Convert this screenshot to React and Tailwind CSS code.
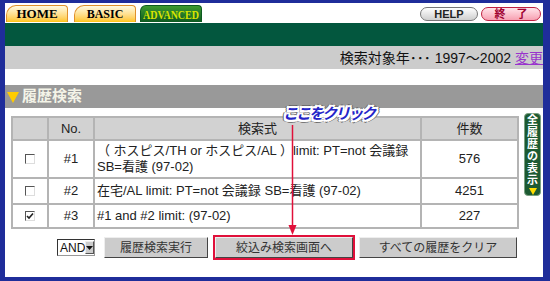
import React from 'react';

const jp = "font-['Liberation_Sans','Noto_Sans_CJK_JP',sans-serif]";

const Checkbox = ({ checked }) => (
  <span className="inline-flex w-[10px] h-[10px] items-center justify-center border border-t-[#555] border-l-[#555] border-b-[#ddd] border-r-[#ddd] bg-white">
    {checked && (
      <svg width="8" height="8" viewBox="0 0 8 8">
        <path d="M1 4 L3 6 L7 1.5" fill="none" stroke="#222" strokeWidth="1.6" />
      </svg>
    )}
  </span>
);

const GrayButton = ({ children, className = '' }) => (
  <button
    className={`h-[21px] bg-[#cccccc] border border-t-[#eee] border-l-[#eee] border-b-[#444] border-r-[#444] text-[12px] text-[#333] leading-none ${className}`}
  >
    {children}
  </button>
);

const rows = [
  {
    id: 1,
    h: 'h-[38px]',
    checked: false,
    query: (
      <>
        （ ホスピス/TH or ホスピス/AL ）limit: PT=not 会議録
        <br />
        SB=看護 (97-02)
      </>
    ),
    count: 576,
  },
  { id: 2, h: 'h-[26px]', checked: false, query: '在宅/AL limit: PT=not 会議録 SB=看護 (97-02)', count: 4251 },
  { id: 3, h: 'h-[24px]', checked: true, query: '#1 and #2 limit: (97-02)', count: 227 },
];

export default function App() {
  return (
    <div className={`relative w-[550px] h-[281px] bg-[#1f2d9a] pt-[3px] pl-[5px] pr-[7px] pb-[4px] ${jp}`}>
      <div className="bg-white h-full flex flex-col">
        {/* Tabs */}
        <div className="h-[20px] flex items-start pt-[2px] pl-[1px]">
          <div className="h-[17px] w-[62px] rounded-tl-[10px] rounded-tr-[4px] border border-b-0 border-[#e0902a] bg-linear-to-b from-[#fffbe0] to-[#ffc400] flex items-center justify-center font-['Liberation_Serif',serif] font-bold text-[13px] text-black">
            HOME
          </div>
          <div className="ml-[6px] h-[17px] w-[62px] rounded-tl-[10px] rounded-tr-[4px] border border-b-0 border-[#e0902a] bg-linear-to-b from-[#fffbe0] to-[#ffc400] flex items-center justify-center font-['Liberation_Serif',serif] font-bold text-[12px] text-black">
            BASIC
          </div>
          <div className="ml-[4px] h-[17px] w-[62px] rounded-tl-[6px] rounded-tr-[4px] border border-b-0 border-[#0c5a20] bg-linear-to-b from-[#3c9a30] to-[#0d5a22] flex items-center justify-center font-['Liberation_Serif',serif] font-bold text-[10px] text-[#d8e400]">
            <span className="inline-block scale-y-125">ADVANCED</span>
          </div>
          <div className="ml-auto mt-[2px] mr-[2px] flex gap-[3px]">
            <div className="h-[14px] w-[58px] rounded-full border border-[#777] bg-linear-to-b from-white to-[#cfcfcf] flex items-center justify-center text-[11px] font-bold text-[#222] leading-none">
              HELP
            </div>
            <div className="h-[14px] w-[60px] rounded-full border border-[#c02040] bg-linear-to-b from-[#ffe4ea] to-[#f6a0b2] flex items-center justify-center text-[11px] font-bold text-[#a00030] leading-none">
              終　了
            </div>
          </div>
        </div>

        {/* Green bar */}
        <div className="h-[23px] bg-[#03573e]" />

        {/* Year bar */}
        <div className="h-[23px] bg-[#cccccc] flex items-center justify-end text-[14px] text-[#111] pt-[1px]">
          <span>検索対象年･･･ 1997〜2002 </span>
          <span className="ml-[4px] text-[#9933cc] underline">変更</span>
        </div>

        <div className="h-[16px]" />

        {/* Section header */}
        <div className="h-[23px] bg-[#999999] flex items-center pl-[2px] text-[15px] font-bold text-[#f4f4e8]">
          <svg width="12" height="12" viewBox="0 0 12 12" className="mr-[3px]">
            <polygon points="0,1 12,1 6,12" fill="#ffcc00" />
          </svg>
          履歴検索
        </div>

        {/* Table + side button */}
        <div className="flex items-start pl-[6px] pt-[5px]">
          <table className="mt-[3px] w-[506px] table-fixed border-collapse border-2 border-[#b4b4b4] text-[13px] text-[#222]">
            <colgroup>
              <col className="w-[36px]" />
              <col className="w-[46px]" />
              <col className="w-[327px]" />
              <col className="w-[97px]" />
            </colgroup>
            <thead>
              <tr className="h-[23px] bg-[#d2d2d2]">
                <th className="border-2 border-[#b4b4b4] font-normal" />
                <th className="border-2 border-[#b4b4b4] font-normal">No.</th>
                <th className="border-2 border-[#b4b4b4] font-normal">検索式</th>
                <th className="border-2 border-[#b4b4b4] font-normal">件数</th>
              </tr>
            </thead>
            <tbody>
              {rows.map((r) => (
                <tr key={r.id} className={r.h}>
                  <td className="border-2 border-[#b4b4b4] text-center align-middle">
                    <div className="flex justify-center">
                      <Checkbox checked={r.checked} />
                    </div>
                  </td>
                  <td className="border-2 border-[#b4b4b4] text-center">#{r.id}</td>
                  <td className="border-2 border-[#b4b4b4] pl-[2px] leading-[16px] whitespace-nowrap overflow-hidden">{r.query}</td>
                  <td className="border-2 border-[#b4b4b4] text-center">{r.count}</td>
                </tr>
              ))}
            </tbody>
          </table>

          <div className="ml-[5px] w-[17px] h-[83px] rounded-[4px] bg-[#1c5a32] border border-[#7aa080] flex flex-col items-center justify-center text-white text-[11px] font-bold leading-[12px]">
            {['全', '履', '歴', 'の', '表', '示'].map((c) => (
              <span key={c}>{c}</span>
            ))}
            <svg width="8" height="7" viewBox="0 0 8 7" className="mt-[2px]">
              <polygon points="0,0 8,0 4,7" fill="#ffdd00" />
            </svg>
          </div>
        </div>

        {/* Buttons */}
        <div className="flex items-center pl-[52px] pt-[6px]">
          <div className="h-[17px] w-[38px] flex items-center border border-t-[#333] border-l-[#333] border-b-[#999] border-r-[#999] bg-white">
            <span className="flex-1 text-[12px] text-[#111] pl-[2px] leading-none">AND</span>
            <span className="w-[13px] h-[13px] mr-[1px] bg-[#cccccc] border border-t-[#eee] border-l-[#eee] border-b-[#555] border-r-[#555] flex items-center justify-center">
              <svg width="7" height="4" viewBox="0 0 7 4">
                <polygon points="0,0 7,0 3.5,4" fill="#111" />
              </svg>
            </span>
          </div>
          <GrayButton className="ml-[9px] w-[104px]">履歴検索実行</GrayButton>
          <div className="ml-[5px] border-2 border-[#e0103a] p-0 flex">
            <GrayButton className="w-[138px] h-[19px]">絞込み検索画面へ</GrayButton>
          </div>
          <GrayButton className="ml-[4px] w-[158px]">すべての履歴をクリア</GrayButton>
        </div>
      </div>

      {/* Annotation overlay */}
      <div className="absolute left-[281px] top-[104px] text-[15px] font-bold italic text-[#2424c8] tracking-[-2px] leading-[20px] px-[2px] [text-shadow:-2px_-2px_0_#fff,2px_-2px_0_#fff,-2px_2px_0_#fff,2px_2px_0_#fff,0_2px_0_#fff,0_-2px_0_#fff,2px_0_0_#fff,-2px_0_0_#fff,-3px_0_0_#666,3px_0_0_#666,0_-3px_0_#666,0_3px_0_#666,-3px_-2px_0_#666,3px_2px_0_#666,-3px_2px_0_#666,3px_-2px_0_#666]">
        ここをクリック
      </div>
      <svg className="absolute left-[287px] top-[125px]" width="11" height="111" viewBox="0 0 11 111">
        <line x1="5.5" y1="0" x2="5.5" y2="103" stroke="#e0103a" strokeWidth="1.5" />
        <polygon points="1.5,100 9.5,100 5.5,110" fill="#e0103a" />
      </svg>
    </div>
  );
}
